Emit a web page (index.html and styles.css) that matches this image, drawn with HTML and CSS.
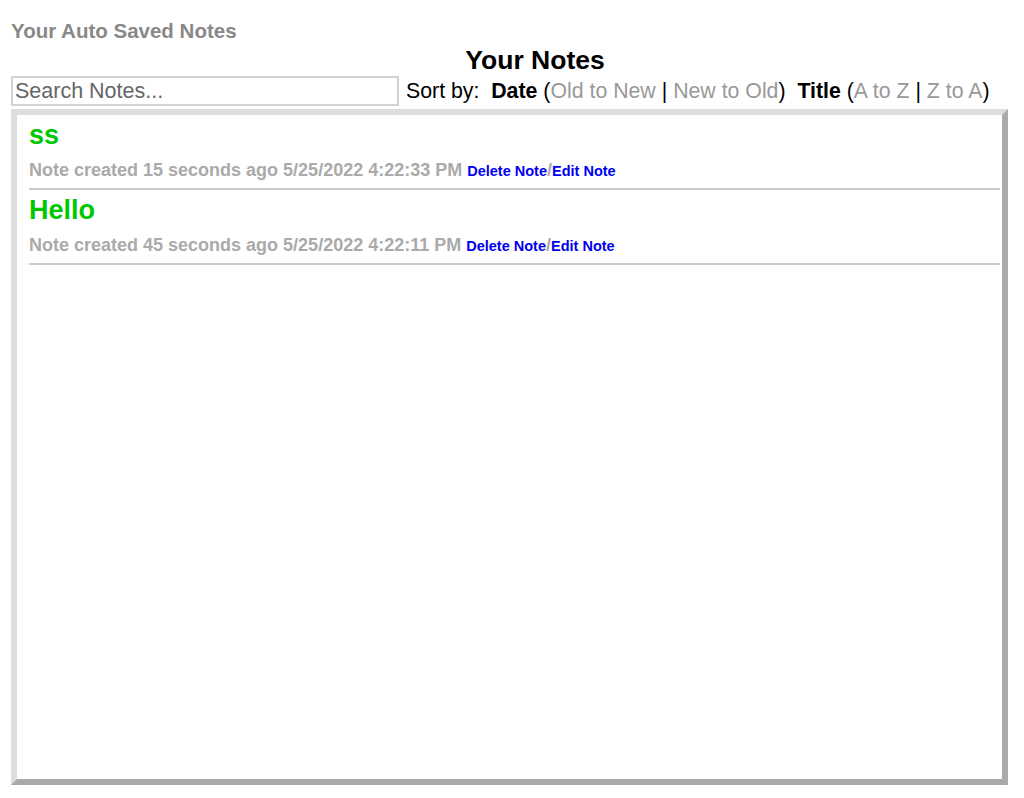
FILE: index.html
```html
<!DOCTYPE html>
<html lang="en">
<head>
    <meta charset="UTF-8">
    <title>Your Notes</title>
    <link rel="stylesheet" href="styles.css">
</head>
<body>
    <h3 class="site-title">Your Auto Saved Notes</h3>
    <h2 class="page-title">Your Notes</h2>
    <div class="toolbar">
        <input type="text" class="search" placeholder="Search Notes...">
        <div class="sort">
            Sort by:&nbsp;
            <b>Date</b> (<a href="#">Old to New</a> | <a href="#">New to Old</a>)
            &nbsp;<b>Title</b> (<a href="#">A to Z</a> | <a href="#">Z to A</a>)
        </div>
    </div>
    <div class="notes">
        <div class="note">
            <h2 class="note-title">ss</h2>
            <div class="meta">
                Note created 15 seconds ago 5/25/2022 4:22:33 PM
                <a href="#">Delete Note</a>/<a href="#">Edit Note</a>
            </div>
        </div>
        <div class="note">
            <h2 class="note-title">Hello</h2>
            <div class="meta">
                Note created 45 seconds ago 5/25/2022 4:22:11 PM
                <a href="#">Delete Note</a>/<a href="#">Edit Note</a>
            </div>
        </div>
    </div>
</body>
</html>
```

FILE: styles.css
```css
* {
    margin: 0;
    padding: 0;
    box-sizing: border-box;
}
body {
    font-family: 'Liberation Sans', Arial, sans-serif;
    background: #fff;
    color: #000;
    padding: 20px 16px 13px 11px;
}
.site-title {
    font-size: 20.5px;
    color: #888;
    line-height: 22px;
}
.page-title {
    font-size: 26.5px;
    text-align: center;
    line-height: 28px;
    margin-top: 4px;
    padding-left: 51px;
}
.toolbar {
    display: flex;
    align-items: center;
    margin-top: 2px;
}
.search {
    width: 388px;
    height: 30px;
    border: 2px solid #d4d4cf;
    font-family: inherit;
    font-size: 21.5px;
    padding: 0 2px;
    outline: none;
}
.search::placeholder {
    color: #666;
}
.sort {
    font-size: 21.3px;
    margin-left: 7px;
}
.sort a {
    color: #999;
    text-decoration: none;
}
.notes {
    margin-top: 3px;
    height: 676px;
    border: 6px solid;
    border-color: #ddd #aaa #aaa #ddd;
    padding: 4px 2px 0 12px;
}
.note {
    border-bottom: 2px solid #ccc;
    padding-bottom: 2px;
    margin-bottom: 4px;
}
.note-title {
    color: #00c800;
    font-size: 27px;
    line-height: 32px;
}
.meta {
    color: #aaa;
    font-size: 18px;
    font-weight: bold;
    line-height: 30px;
    padding-top: 4px;
}
.meta a {
    color: #00e;
    font-size: 14.5px;
    text-decoration: none;
}
```
